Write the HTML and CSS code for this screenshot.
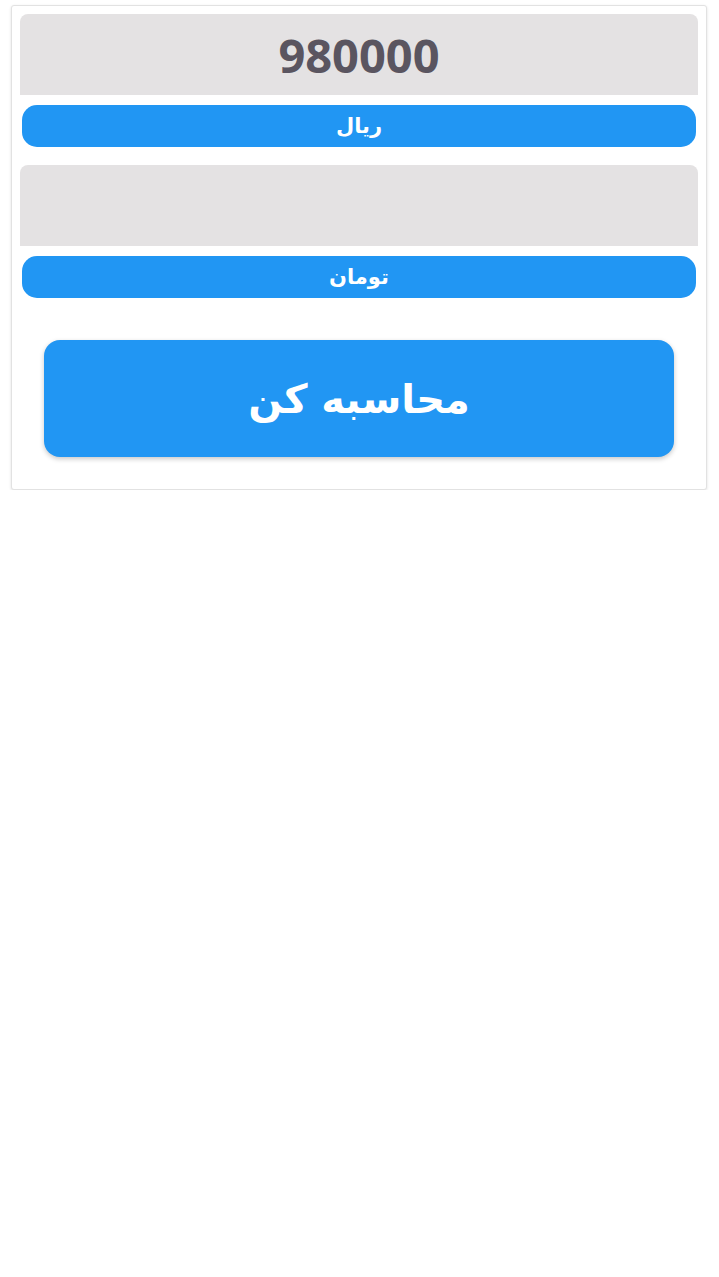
FILE: index.html
```html
<!DOCTYPE html>
<html lang="fa" dir="rtl">
<head>
<meta charset="utf-8">
<link rel="stylesheet" href="styles.css">
</head>
<body>
<div class="card">
  <div class="field"><span class="value">980000</span></div>
  <div class="unit">ریال</div>
  <div class="field field-second"><span class="value"></span></div>
  <div class="unit">تومان</div>
  <button class="calc">محاسبه کن</button>
</div>
</body>
</html>
```
FILE: styles.css
```css
html, body {
  margin: 0;
  padding: 0;
  background: #ffffff;
}
body {
  padding: 5px 12px 0 11px;
  font-family: "DejaVu Sans", "Noto Sans", sans-serif;
}
.card {
  box-sizing: border-box;
  width: 696px;
  border: 1px solid #e2e2e2;
  border-radius: 3px;
  box-shadow: 0 1px 3px rgba(0,0,0,0.12);
  padding: 8px 8px 32px 8px;
  display: flex;
  flex-direction: column;
  background: #fff;
}
.field {
  height: 81px;
  background: #e4e2e3;
  border-radius: 8px 8px 0 0;
  display: flex;
  align-items: center;
  justify-content: center;
}
.field-second {
  margin-top: 18px;
}
.value {
  font-family: "Open Sans", "Noto Sans", sans-serif;
  font-weight: 700;
  font-size: 47px;
  color: #5a5560;
  direction: ltr;
}
.unit {
  margin: 10px 2px 0 2px;
  height: 42px;
  background: #2196f3;
  border-radius: 15px;
  color: #fff;
  font-weight: 700;
  font-size: 21px;
  display: flex;
  align-items: center;
  justify-content: center;
}
.calc {
  margin: 42px 24px 0 24px;
  height: 117px;
  background: #2196f3;
  border: none;
  border-radius: 16px;
  box-shadow: 0 2px 5px rgba(0,0,0,0.22);
  color: #fff;
  font-family: "DejaVu Sans", "Noto Sans", sans-serif;
  font-weight: 700;
  font-size: 40px;
  padding: 0;
}
```
